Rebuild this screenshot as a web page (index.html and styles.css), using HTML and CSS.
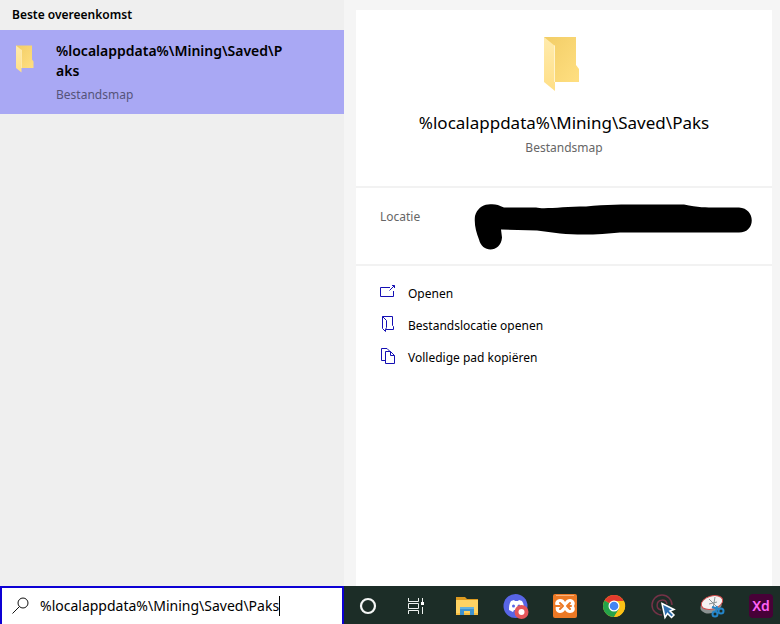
FILE: index.html
```html
<!DOCTYPE html>
<html lang="nl">
<head>
<meta charset="utf-8">
<meta name="viewport" content="width=device-width, initial-scale=1">
<title>Zoeken</title>
<link rel="stylesheet" href="styles.css">
</head>
<body>
<svg width="0" height="0" class="defs" aria-hidden="true">
  <defs>
    <linearGradient id="back" x1="0" y1="0" x2="1" y2="1"><stop offset="0" stop-color="#f2cd66"/><stop offset="1" stop-color="#ffdf81"/></linearGradient>
    <linearGradient id="flap" x1="0" y1="0" x2="0" y2="1"><stop offset="0" stop-color="#ffebad"/><stop offset="1" stop-color="#ffdf86"/></linearGradient>
    <symbol id="folder" viewBox="1 0 40 56">
      <path fill="url(#back)" d="M1 1h32v28l3 4v13H1z"/>
      <path fill="url(#flap)" d="M1 1l11 9v45L1 46z"/>
      <path fill="#fff3cb" d="M11 9l1 1v36h-1z"/>
    </symbol>
  </defs>
</svg>
<div class="screen">
  <aside class="results">
    <h2 class="group-title">Beste overeenkomst</h2>
    <button class="result" type="button">
      <svg class="result-icon" aria-hidden="true"><use href="#folder"/></svg>
      <span class="result-text">
        <span class="result-name">%localappdata%\Mining\Saved\Paks</span>
        <span class="kind">Bestandsmap</span>
      </span>
    </button>
  </aside>

  <main class="preview">
    <div class="card">
      <header class="summary">
        <svg class="summary-icon" aria-hidden="true"><use href="#folder"/></svg>
        <h1 class="summary-name">%localappdata%\Mining\Saved\Paks</h1>
        <p class="kind">Bestandsmap</p>
      </header>
      <section class="details">
        <span class="kind">Locatie</span>
        <svg class="redaction" viewBox="0 0 278 48" aria-hidden="true"><path d="M14 .5c6-1 10 0 16 3h32c8 2 28-1 50-1 20-2 38-2 54-2h44c14 3 22 3 32 3h23c17 1 17 25 0 25H146c-18 2-40 3-60 1l-23-3-36-1 1 8c-1 15-20 16-23 2C2 28 0 20 1 12 3 5 8 1 14 .5z"/></svg>
      </section>
      <nav class="actions">
        <button type="button" class="action">
          <svg width="16" height="16" viewBox="0 0 16 16" aria-hidden="true"><path d="M10 3.500H.5v9h13V7M9.500 6.500l5-5M12 1.500h2.500V4"/></svg>
          Openen
        </button>
        <button type="button" class="action">
          <svg width="16" height="16" viewBox="0 0 16 16" aria-hidden="true"><path d="M2.500.5h10v9l1 1v3h-8M2.500.5v12l3 3v-2l1-2V4.500z"/></svg>
          Bestandslocatie openen
        </button>
        <button type="button" class="action">
          <svg width="16" height="16" viewBox="0 0 16 16" aria-hidden="true"><path d="M5 12.500H1.500V.5H7l3 3M5.500 3.500h5l4 4v8h-9zM10.500 3.500v4h4"/></svg>
          Volledige pad kopiëren
        </button>
      </nav>
    </div>
  </main>

  <label class="search">
    <svg width="18" height="18" viewBox="0 0 18 18" aria-hidden="true"><circle cx="11" cy="6" r="5"/><path d="M7.500 9.500L.5 16.500"/></svg>
    <input class="query" type="text" size="30" aria-label="Zoeken" value="%localappdata%\Mining\Saved\Paks">
    <span class="caret"></span>
  </label>

  <nav class="taskbar">
    <button type="button" aria-label="Cortana"><svg viewBox="0 0 24 24"><circle cx="12" cy="12" r="7" fill="none" stroke="#f4f6f5" stroke-width="2.200"/></svg></button>
    <button type="button" aria-label="Taakweergave"><svg viewBox="0 0 24 24"><path fill="none" stroke="#eef2f0" d="M3.500 4v3.500h10V4M3.500 20v-3.500h10V20M3.500 9.500h10v5h-10zM17.500 4v4M17.500 13v7"/><path fill="#fff" d="M16 8h3v3h-3z"/></svg></button>
    <button type="button" aria-label="Verkenner"><svg viewBox="0 0 24 24"><path fill="#dd9b21" d="M2 3h9l2 2h11v5H2z"/><path fill="#ffd363" d="M2 6h22v15H2z"/><path fill="#f6bd42" d="M2 19h22v2H2z"/><path fill="#3f93cf" d="M6 13h14v8h-4v-4h-6v4H6z"/><path fill="#65b2df" d="M6 13h14v2H6z"/></svg></button>
    <button type="button" aria-label="Discord"><svg viewBox="0 0 24 24"><circle cx="12.500" cy="12" r="12" fill="#5865e6"/><path fill="#fff" d="M8 7l3-1 1 1h3l1-1 3 1c2 3 2 6 2 9l-4 2-1-2h-5l-1 2-4-2c0-3 0-6 2-9z"/><circle cx="10.500" cy="12" r="1.500" fill="#5865e6"/><circle cx="16" cy="12" r="1.500" fill="#5865e6"/><circle cx="18.500" cy="18" r="7" fill="#e5555a"/><circle cx="18.500" cy="18" r="3" fill="#fff"/></svg></button>
    <button type="button" aria-label="XAMPP"><svg viewBox="0 0 24 24"><rect width="24" height="24" rx="2" fill="#ec7925"/><path fill="#f8b07a" d="M3 1h18v1H3z"/><path fill="#fff" d="M7 5c3 0 4 1 5 3 1-2 3-3 5-3 4 0 6 4 4 7 2 4 0 7-4 7-2 0-4-1-5-3-1 2-3 3-5 3-4 0-5-4-4-7-2-3 0-7 4-7z"/><path fill="none" stroke="#ec7925" stroke-width="2" stroke-linecap="round" stroke-linejoin="round" d="M2 12h5M7 9l3 3-3 3M17 9l-3 3 3 3M14 12h4"/></svg></button>
    <button type="button" aria-label="Chrome"><svg viewBox="0 0 24 24"><circle cx="12" cy="12" r="11" fill="#fbc116"/><path fill="#e33b2e" d="M12 12L2.500 6.500a11 11 0 0 1 19 0z"/><path fill="#25a34a" d="M2.500 6.500a11 11 0 0 0 9.500 16.500l5-8-5-3z"/><path fill="#fbc116" d="M12 7h10a11 11 0 0 1-10 16l5-8z"/><circle cx="12" cy="12" r="5.500" fill="#fff"/><circle cx="12" cy="12" r="4.300" fill="#4285f4"/></svg></button>
    <button type="button" aria-label="Aanwijzer"><svg viewBox="0 0 24 24"><g fill="none" stroke="#743247" stroke-width="1.500"><path d="M11 21A10 10 0 1 1 21 11"/><path d="M10 16a5 5 0 1 1 6-6"/></g><path fill="#2f6fae" stroke="#fff" stroke-width="1.500" d="M11 9.500l12 6-4 1.500 4 4-2.500 2.500-4-4-2.500 4z"/></svg></button>
    <button type="button" aria-label="Knipprogramma"><svg viewBox="0 0 24 24"><ellipse cx="11" cy="12" rx="11" ry="7" transform="rotate(-16 11 12)" fill="#8b9292"/><ellipse cx="12" cy="8.500" rx="11" ry="6.500" transform="rotate(-16 12 8.500)" fill="#f4f2f2" stroke="#d24b4b"/><path fill="none" stroke="#8a9295" d="M9 5l9 9M15 3l-2 12M9 10l8-2"/><g fill="none" stroke="#2486ca" stroke-width="2"><path d="M12 13l7 2M17 12l-1 5"/><circle cx="15" cy="20" r="2.500"/><circle cx="21" cy="17" r="2.500"/></g></svg></button>
    <button type="button" aria-label="Adobe XD" class="xd">Xd</button>
  </nav>
</div>
</body>
</html>
```
FILE: styles.css
```css
* {
  box-sizing: border-box;
}

body {
  margin: 0;
  font: 12px/20px "Noto Sans", "Open Sans", sans-serif;
  color: #000;
}

h1, h2, p {
  margin: 0;
  font-weight: 400;
}

button {
  border: 0;
  padding: 0;
  background: none;
  font: inherit;
  color: inherit;
  text-align: left;
}

svg {
  flex: none;
}

.defs {
  position: absolute;
}

.screen {
  display: grid;
  grid-template: 1fr 38px / 344px 1fr;
  min-height: 100vh;
}

.results {
  background: #efefef;
}

.group-title {
  padding: 5px 12px;
  font-size: 12px;
  font-weight: 600;
}

.result {
  display: flex;
  gap: 20px;
  width: 100%;
  padding: 11px 56px 9px 16px;
  background: #a9a8f4;
}

.result-icon {
  width: 20px;
  height: 28px;
  margin-top: 4px;
}

.result-text {
  flex: 1;
  min-width: 0;
}

.result-name {
  display: block;
  margin-bottom: 4px;
  font-size: 14px;
  font-weight: 600;
  word-break: break-all;
}

.kind {
  color: #666;
}

.result .kind {
  color: #55547a;
}

.preview {
  display: flex;
  padding: 10px 8px 0 12px;
  background: #f5f5f5;
}

.card {
  flex: 1;
  background: #fff;
}

.summary {
  display: flex;
  flex-direction: column;
  align-items: center;
  padding: 26px 20px 28px;
  border-bottom: 2px solid #f2f2f2;
}

.summary-icon {
  width: 40px;
  height: 56px;
}

.summary-name {
  margin: 18px 0 2px;
  font-size: 17px;
  line-height: 26px;
}

.details {
  display: flex;
  justify-content: space-between;
  padding: 16px 20px 12px 24px;
  border-bottom: 2px solid #f2f2f2;
}

.details .kind {
  padding-top: 3px;
}

.redaction {
  width: 278px;
  height: 48px;
}

.actions {
  display: flex;
  flex-direction: column;
  padding: 12px 24px;
}

.action {
  display: flex;
  align-items: center;
  gap: 12px;
  height: 32px;
}

.action svg {
  margin-bottom: 4px;
  fill: none;
  stroke: #1510b4;
}

.search {
  display: flex;
  align-items: center;
  padding: 0 10px;
  border: 2px solid #0d00d4;
  border-bottom: 0;
  background: #fff;
}

.search svg {
  margin-right: 10px;
  fill: none;
  stroke: #111;
}

.query {
  field-sizing: content;
  min-width: 0;
  padding: 0;
  border: 0;
  outline: 0;
  background: none;
  font: 14px/20px "Noto Sans", "Open Sans", sans-serif;
  color: #000;
}

.caret {
  width: 1px;
  height: 20px;
  background: #000;
}

.taskbar {
  display: flex;
  align-items: center;
  justify-content: space-between;
  padding: 2px 7px 0 12px;
  background: #1c2d27;
}

.taskbar button {
  width: 24px;
  height: 24px;
}

.taskbar svg {
  display: block;
  width: 24px;
  height: 24px;
  overflow: visible;
}

.taskbar .xd {
  border-radius: 4px;
  background: #470137;
  color: #ff61f6;
  font-size: 14px;
  font-weight: 600;
  text-align: center;
}
```
